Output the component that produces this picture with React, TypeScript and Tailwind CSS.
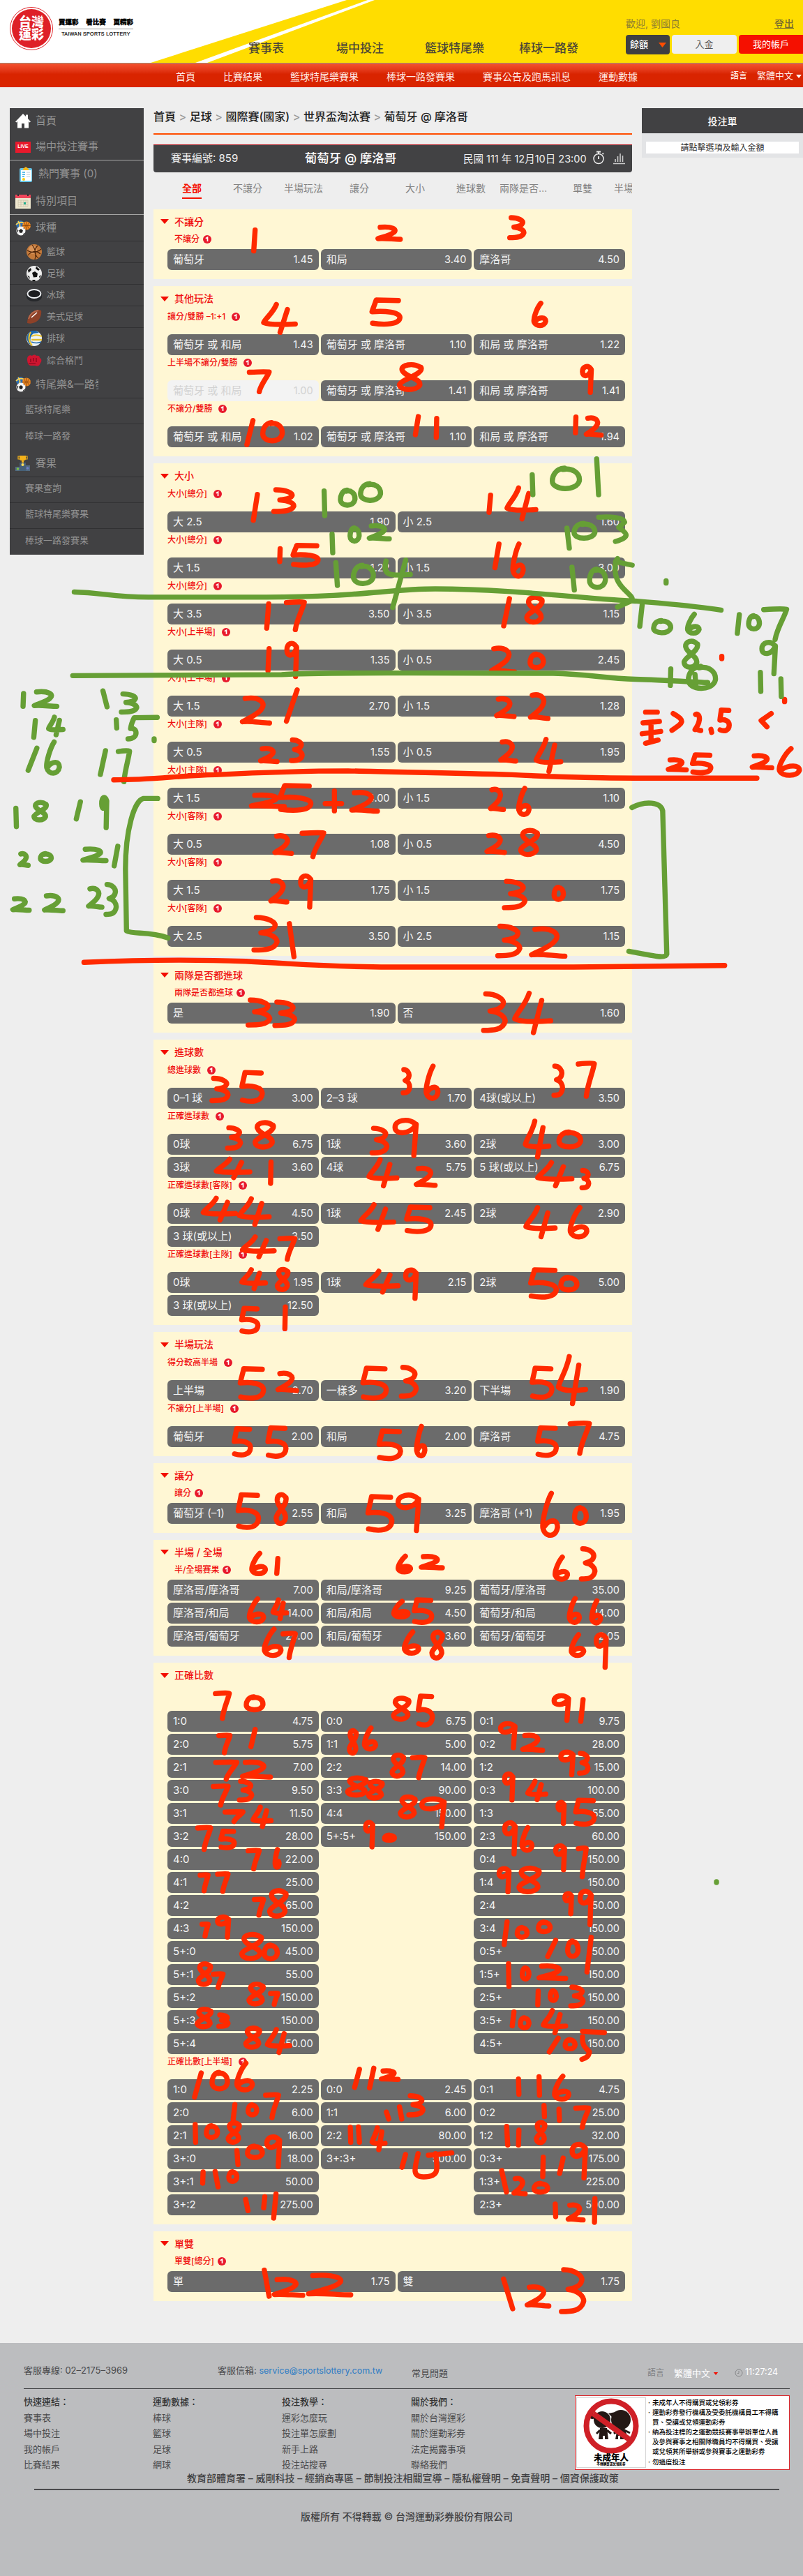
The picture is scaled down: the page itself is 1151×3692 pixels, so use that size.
import React from 'react';

type Odd = [string, string, boolean?];
type Group = { label?: string; cols: 2 | 3; rows: (Odd | null)[] };
type Panel = { title: string; indent?: boolean; groups: Group[] };

const two = (label: string, line: string, over: string, under: string): Group => ({
  label,
  cols: 2,
  rows: [['大 ' + line, over], ['小 ' + line, under]],
});

const columns = (a: Odd[], b: Odd[], c: Odd[]): (Odd | null)[] => {
  const out: (Odd | null)[] = [];
  for (let i = 0; i < Math.max(a.length, b.length, c.length); i++) out.push(a[i] ?? null, b[i] ?? null, c[i] ?? null);
  return out;
};

const panels: Panel[] = [
  { title: '不讓分', indent: true, groups: [{ label: '不讓分', cols: 3, rows: [['葡萄牙', '1.45'], ['和局', '3.40'], ['摩洛哥', '4.50']] }] },
  {
    title: '其他玩法',
    groups: [
      { label: '讓分/雙勝 –1:+1', cols: 3, rows: [['葡萄牙 或 和局', '1.43'], ['葡萄牙 或 摩洛哥', '1.10'], ['和局 或 摩洛哥', '1.22']] },
      { label: '上半場不讓分/雙勝', cols: 3, rows: [['葡萄牙 或 和局', '1.00', true], ['葡萄牙 或 摩洛哥', '1.41'], ['和局 或 摩洛哥', '1.41']] },
      { label: '不讓分/雙勝', cols: 3, rows: [['葡萄牙 或 和局', '1.02'], ['葡萄牙 或 摩洛哥', '1.10'], ['和局 或 摩洛哥', '1.94']] },
    ],
  },
  {
    title: '大小',
    groups: [
      two('大小[總分]', '2.5', '1.90', '1.60'),
      two('大小[總分]', '1.5', '1.22', '3.00'),
      two('大小[總分]', '3.5', '3.50', '1.15'),
      two('大小[上半場]', '0.5', '1.35', '2.45'),
      two('大小[上半場]', '1.5', '2.70', '1.28'),
      two('大小[主隊]', '0.5', '1.55', '1.95'),
      two('大小[主隊]', '1.5', '4.00', '1.10'),
      two('大小[客隊]', '0.5', '1.08', '4.50'),
      two('大小[客隊]', '1.5', '1.75', '1.75'),
      two('大小[客隊]', '2.5', '3.50', '1.15'),
    ],
  },
  { title: '兩隊是否都進球', indent: true, groups: [{ label: '兩隊是否都進球', cols: 2, rows: [['是', '1.90'], ['否', '1.60']] }] },
  {
    title: '進球數',
    groups: [
      { label: '總進球數', cols: 3, rows: [['0–1 球', '3.00'], ['2–3 球', '1.70'], ['4球(或以上)', '3.50']] },
      { label: '正確進球數', cols: 3, rows: [['0球', '6.75'], ['1球', '3.60'], ['2球', '3.00'], ['3球', '3.60'], ['4球', '5.75'], ['5 球(或以上)', '6.75']] },
      { label: '正確進球數[客隊]', cols: 3, rows: [['0球', '4.50'], ['1球', '2.45'], ['2球', '2.90'], ['3 球(或以上)', '3.50']] },
      { label: '正確進球數[主隊]', cols: 3, rows: [['0球', '1.95'], ['1球', '2.15'], ['2球', '5.00'], ['3 球(或以上)', '12.50']] },
    ],
  },
  {
    title: '半場玩法',
    groups: [
      { label: '得分較高半場', cols: 3, rows: [['上半場', '2.70'], ['一樣多', '3.20'], ['下半場', '1.90']] },
      { label: '不讓分[上半場]', cols: 3, rows: [['葡萄牙', '2.00'], ['和局', '2.00'], ['摩洛哥', '4.75']] },
    ],
  },
  { title: '讓分', indent: true, groups: [{ label: '讓分', cols: 3, rows: [['葡萄牙 (–1)', '2.55'], ['和局', '3.25'], ['摩洛哥 (+1)', '1.95']] }] },
  {
    title: '半場 / 全場',
    indent: true,
    groups: [
      {
        label: '半/全場賽果',
        cols: 3,
        rows: [
          ['摩洛哥/摩洛哥', '7.00'], ['和局/摩洛哥', '9.25'], ['葡萄牙/摩洛哥', '35.00'],
          ['摩洛哥/和局', '14.00'], ['和局/和局', '4.50'], ['葡萄牙/和局', '14.00'],
          ['摩洛哥/葡萄牙', '20.00'], ['和局/葡萄牙', '3.60'], ['葡萄牙/葡萄牙', '2.05'],
        ],
      },
    ],
  },
  {
    title: '正確比數',
    groups: [
      {
        cols: 3,
        rows: columns(
          [['1:0', '4.75'], ['2:0', '5.75'], ['2:1', '7.00'], ['3:0', '9.50'], ['3:1', '11.50'], ['3:2', '28.00'], ['4:0', '22.00'], ['4:1', '25.00'], ['4:2', '65.00'], ['4:3', '150.00'], ['5+:0', '45.00'], ['5+:1', '55.00'], ['5+:2', '150.00'], ['5+:3', '150.00'], ['5+:4', '150.00']],
          [['0:0', '6.75'], ['1:1', '5.00'], ['2:2', '14.00'], ['3:3', '90.00'], ['4:4', '150.00'], ['5+:5+', '150.00']],
          [['0:1', '9.75'], ['0:2', '28.00'], ['1:2', '15.00'], ['0:3', '100.00'], ['1:3', '55.00'], ['2:3', '60.00'], ['0:4', '150.00'], ['1:4', '150.00'], ['2:4', '150.00'], ['3:4', '150.00'], ['0:5+', '150.00'], ['1:5+', '150.00'], ['2:5+', '150.00'], ['3:5+', '150.00'], ['4:5+', '150.00']],
        ),
      },
      {
        label: '正確比數[上半場]',
        cols: 3,
        rows: columns(
          [['1:0', '2.25'], ['2:0', '6.00'], ['2:1', '16.00'], ['3+:0', '18.00'], ['3+:1', '50.00'], ['3+:2', '275.00']],
          [['0:0', '2.45'], ['1:1', '6.00'], ['2:2', '80.00'], ['3+:3+', '500.00']],
          [['0:1', '4.75'], ['0:2', '25.00'], ['1:2', '32.00'], ['0:3+', '175.00'], ['1:3+', '225.00'], ['2:3+', '500.00']],
        ),
      },
    ],
  },
  { title: '單雙', indent: true, groups: [{ label: '單雙[總分]', cols: 2, rows: [['單', '1.75'], ['雙', '1.75']] }] },
];

const Badge = () => (
  <svg viewBox="0 0 12 12" className="h-3 w-3 shrink-0">
    <circle cx="6" cy="6" r="6" fill="#e8192c" />
    <path d="M3.8 4.800 6.500 3.200V9" fill="none" stroke="#fff" strokeWidth="1.7" />
  </svg>
);

const OddButton = ({ odd }: { odd: Odd | null }) =>
  odd ? (
    <div className={`flex h-[30px] items-center justify-between rounded-[6px] px-2 text-[15px] ${odd[2] ? 'bg-[#f3f3f3] text-[#d2d2d2]' : 'bg-[#6b6b6b] text-[#f4f4f4]'}`}>
      <span className="whitespace-nowrap">{odd[0]}</span>
      <span className="text-[14.500px]">{odd[1]}</span>
    </div>
  ) : (
    <div className="h-[30px]" />
  );

const PanelView = ({ panel }: { panel: Panel }) => (
  <section className="bg-[#fff7d4] pb-[13px]">
    <div className={`flex items-center pt-[3px] text-[14px] font-medium leading-none text-[#f01010] ${panel.indent ? 'h-[32px]' : 'h-[33px]'}`}>
      <svg viewBox="0 0 12 7" className="ml-[10px] mr-2 h-[7px] w-3"><path d="M0 0h12L6 7z" fill="#f20d00" /></svg>
      {panel.title}
    </div>
    {panel.groups.map((g, i) => (
      <div key={i} className="px-5 pr-[10px]">
        <div className={`flex text-[12px] font-medium leading-none text-[#f01010] ${panel.indent ? 'h-[25px] items-center gap-[5px] pb-[3px] pl-[10px]' : 'h-[36px] items-start gap-[9px] pt-[5px]'}`}>
          {g.label && (<><span>{g.label}</span><Badge /></>)}
        </div>
        <div className={`grid gap-[3px] ${g.cols === 2 ? 'grid-cols-2' : 'grid-cols-3'}`}>
          {g.rows.map((o, j) => <OddButton key={j} odd={o} />)}
        </div>
      </div>
    ))}
  </section>
);

/* ---------- sidebar icons ---------- */
const Home = () => <svg viewBox="0 0 22 21" className="h-[21px] w-[22px]"><path d="M11 0 15 4V1.5h3V7l4 4.5-1.5 1L19 11v9.500h-6V14H9v6.500H3V11l-1.500 1.500L0 11.500z" fill="#fff" /></svg>;
const Live = () => <div className="flex h-4 w-[22px] items-center justify-center bg-[#e8192c] font-['Liberation_Sans'] text-[7px] font-bold text-white">LIVE</div>;
const Clip = () => (
  <svg viewBox="0 0 18 22" className="ml-[6px] h-[22px] w-[18px]">
    <rect y="2" width="18" height="20" rx="2" fill="#67c6ea" /><rect x="2" y="5" width="15" height="15" fill="#fff" />
    <path d="M9 0l4 3v2H5V3z" fill="#f7b717" /><path d="M4 8h4M4 11h4M4 14h3" stroke="#2ea9df" strokeWidth="1.400" /><path d="M10 8h5M10 11h5M10 14h5" stroke="#b9c8d4" /><circle cx="6" cy="18" r="2" fill="#f7d217" />
  </svg>
);
const Cal = () => (
  <svg viewBox="0 0 22 21" className="h-[21px] w-[22px]">
    <rect y="2" width="22" height="19" fill="#efe7cf" /><rect y="1" width="22" height="5" fill="#f0465a" />
    <path d="M4 0v3M18 0v3" stroke="#333" strokeWidth="2" /><path d="M4 9h14v9H4zM4 12h14M4 15h14M8 9v9M12 9v9M15 9v9" fill="none" stroke="#c9c2a8" strokeWidth=".8" /><rect x="12" y="12" width="3" height="3" fill="#1fae8d" />
  </svg>
);
const Balls = () => (
  <svg viewBox="0 0 22 22" className="h-[22px] w-[22px]">
    <circle cx="7" cy="6" r="6" fill="#2f6fb3" /><path d="M1 6c4-4 8-4 12-2M4 1c3 3 3 7 1 10" stroke="#ffd34d" strokeWidth="1.700" fill="none" />
    <circle cx="16" cy="7.500" r="6" fill="#f08a24" /><path d="M10 7.500h12M16 1.500v12M12 3c3 3 3 6 0 9M20 3c-3 3-3 6 0 9" stroke="#7a3d0a" strokeWidth=".8" fill="none" />
    <circle cx="8" cy="15" r="6.500" fill="#f4f4f4" /><path d="M8 12.500l2.500 1.800-1 3H6.500l-1-3zM2.500 13l1.500 1-1 3M13 12l-1.500-1M11 20l2-2" fill="#222" stroke="#222" strokeWidth=".8" />
  </svg>
);
const Basket = () => <svg viewBox="0 0 22 22" className="h-[22px] w-[22px]"><circle cx="11" cy="11" r="11" fill="#c47a3b" /><circle cx="9" cy="8" r="6" fill="#d9955a" /><path d="M1 9c7 4 14 3 20-2M8 1c5 6 6 13 4 21M2 16c5-6 11-8 18-2M16 2c-5 5-6 12 1 18" stroke="#4a2208" strokeWidth="1.100" fill="none" /></svg>;
const Soccer = () => <svg viewBox="0 0 22 22" className="h-[22px] w-[22px]"><circle cx="11" cy="11" r="11" fill="#ededed" /><path d="M8 10l4-2 4 3-1 5-5 .5zM2 6l4-3 1 3-4 4zM14 1l5 4-2 2-4-3zM1 14l3 1 1 4zM18 15l3-2-2 5zM8 20l5 0-1 2H9z" fill="#111" /></svg>;
const Puck = () => <svg viewBox="0 0 22 18" className="h-[18px] w-[22px]"><path d="M0 8v4c2 8 20 8 22 0V8z" fill="#26282b" /><ellipse cx="11" cy="7" rx="9.500" ry="6" fill="#1c1d20" stroke="#f3f5f8" strokeWidth="1.800" /></svg>;
const Football = () => <svg viewBox="0 0 22 22" className="h-[22px] w-[22px]"><path d="M21 2C12-1 1 7 1 20c9 3 22-4 20-18z" fill="#8d4128" /><path d="M3 14C5 7 10 3 17 2" stroke="#b6674a" strokeWidth="2" fill="none" /><path d="M7 12l8-7" stroke="#fff" strokeWidth="1.500" /></svg>;
const Volley = () => <svg viewBox="0 0 22 22" className="h-[22px] w-[22px]"><circle cx="11" cy="11" r="11" fill="#eef3f6" /><path d="M8 0C0 3-2 12 4 19l4 2C4 14 5 8 10 4l8-1C15 0 11-1 8 0z" fill="#1d67ad" /><path d="M6 2C2 8 3 16 8 21M7 8c4-2 10-2 15 0" stroke="#f1c62b" strokeWidth="2" fill="none" /><path d="M7 13h15" stroke="#e5bd2f" strokeWidth="2.500" /><path d="M7 16c5 2 10 2 14 0" stroke="#1d67ad" strokeWidth="1.500" fill="none" /></svg>;
const Fist = () => <svg viewBox="0 0 22 18" className="h-[18px] w-[22px]"><path d="M1 7C1 2 5 0 8 2c2-2 5-2 6 0 3-1 5 0 5 3 3 1 3 5 1 7-1 4-4 6-8 4H6C3 16 1 12 1 7z" fill="#cf1530" /><path d="M6 6v5M10 5v5M14 5v6M3 13h10" stroke="#7d0719" strokeWidth="1.100" fill="none" /></svg>;
const Trophy = () => <svg viewBox="0 0 22 22" className="h-[22px] w-[22px]"><path d="M6 0h9v5c0 3-9 3-9 0zM9 7h3v4H9z" fill="#f4b21b" /><path d="M4 1h13v4H4z" fill="none" stroke="#f4b21b" strokeWidth="1.200" /><path d="M6 10h9v12H6z" fill="#466078" /><path d="M0 16h6v6H0zM15 14h6v8h-6z" fill="#526b82" /><circle cx="10.500" cy="13" r="2" fill="#ffe05a" /><circle cx="3.500" cy="19" r="1.800" fill="#7fc247" /><circle cx="17.500" cy="18" r="1.800" fill="#6f7fc7" /></svg>;

const Main = ({ icon, label, h, line }: { icon: React.ReactNode; label: string; h: string; line: string }) => (
  <div className={`flex items-center pl-2 ${h} ${line}`}>
    <div className="w-7 shrink-0">{icon}</div>
    <span className="ml-px w-[90px] overflow-hidden whitespace-nowrap text-[15px]">{label}</span>
  </div>
);
const Sport = ({ icon, label, line }: { icon: React.ReactNode; label: string; line: string }) => (
  <div className={`flex h-[31px] items-center pl-6 text-[13px] ${line}`}><div className="w-[29px]">{icon}</div>{label}</div>
);
const Sub = ({ label, line }: { label: string; line: string }) => (
  <div className={`flex h-[37.300px] items-center pb-1 pl-[22px] text-[13px] ${line}`}>{label}</div>
);
const dark = 'border-b border-[#313133]';

const Sidebar = () => (
  <aside className="ml-[14px] h-[640px] w-48 bg-[#414143] text-[#929292]">
    <Main icon={<Home />} label="首頁" h="h-[37px]" line="" />
    <Main icon={<Live />} label="場中投注賽事" h="h-[38px]" line="border-b border-[#a5a5a5]" />
    <div className="[&_span]:ml-[5px]"><Main icon={<Clip />} label="熱門賽事 (0)" h="h-[39px]" line="" /></div>
    <Main icon={<Cal />} label="特別項目" h="h-[39px]" line="border-b border-[#a5a5a5]" />
    <Main icon={<Balls />} label="球種" h="h-[38px]" line={dark} />
    <Sport icon={<Basket />} label="籃球" line={dark} />
    <Sport icon={<Soccer />} label="足球" line={dark} />
    <Sport icon={<Puck />} label="冰球" line={dark} />
    <Sport icon={<Football />} label="美式足球" line={dark} />
    <Sport icon={<Volley />} label="排球" line={dark} />
    <Sport icon={<Fist />} label="綜合格鬥" line="" />
    <Main icon={<Balls />} label="特尾樂&一路發" h="h-[39px]" line={dark} />
    <Sub label="籃球特尾樂" line={dark} />
    <Sub label="棒球一路發" line="" />
    <Main icon={<Trophy />} label="賽果" h="h-[38px]" line={dark} />
    <Sub label="賽果查詢" line={dark} />
    <Sub label="籃球特尾樂賽果" line={dark} />
    <Sub label="棒球一路發賽果" line="" />
  </aside>
);

const Header = () => (
  <header className="relative h-[91px] overflow-hidden border-b border-[#9d8f7a] bg-white">
    <svg viewBox="0 0 1151 90" className="absolute inset-0 h-[90px] w-[1151px]">
      <path d="M497 0H527L280 90H216zM537 0H1151V90H297z" fill="#ffdd00" />
    </svg>
    <div className="relative flex h-[90px]">
      <div className="ml-[14px] mt-[10px] flex h-[62px] w-[62px] items-center justify-center rounded-full border border-[#e0262b] p-[2px]">
        <div className="flex h-full w-full flex-col items-center justify-center rounded-full bg-[#de2027] text-[18px] font-black leading-[18px] text-white"><span>台灣</span><span>運彩</span></div>
      </div>
      <div className="ml-2 mt-[25px] w-[107px] text-center text-black">
        <div className="flex justify-between border-b border-[#999] pb-[3px] text-[9.500px] font-black leading-[13px] [-webkit-text-stroke:0.4px_black]"><span>買運彩</span><span>看比賽</span><span>更精彩</span></div>
        <div className="mt-[3px] whitespace-nowrap font-['Liberation_Sans'] text-[7px] font-medium leading-[8px] tracking-[0.350px] [-webkit-text-stroke:0.2px_black]">TAIWAN SPORTS LOTTERY</div>
      </div>
      <nav className="ml-[165px] mt-[58px] flex h-6 items-center whitespace-nowrap text-[17px] font-medium text-[#4b4636]">
        <span className="w-[126px]">賽事表</span><span className="w-[127px]">場中投注</span><span className="w-[135px]">籃球特尾樂</span><span className="w-[153px]">棒球一路發</span>
      </nav>
      <div className="w-[254px] shrink-0 pt-[23px]">
        <div className="flex h-5 items-center justify-between pr-[13px] text-[14px] text-[#8f8030]"><span>歡迎, 劉國良</span><span className="font-medium text-[#776a30] underline">登出</span></div>
        <div className="mt-[7px] flex gap-[3px] text-[13px]">
          <div className="flex h-7 w-[63px] items-center justify-between rounded bg-[#3f3f41] pl-[6px] pr-[5px] font-medium text-white">餘額<svg viewBox="0 0 11 7" className="h-[7px] w-[11px]"><path d="M0 0h11L5.500 7z" fill="#ff4d00" /></svg></div>
          <div className="flex h-[27px] w-[93px] items-center justify-center rounded bg-[#efefef] text-[#555]">入金</div>
          <div className="flex h-[27px] w-[92px] items-center justify-center rounded-l bg-[#f51000] text-white">我的帳戶</div>
        </div>
      </div>
    </div>
  </header>
);

const TopNav = () => (
  <div className="flex h-[34px] items-center gap-10 whitespace-nowrap bg-linear-to-b from-[#f4512f] to-[#d92400] to-45% pl-[252px] pt-[2px] text-[14px] text-[#ffeae4]">
    <span>首頁</span><span>比賽結果</span><span>籃球特尾樂賽果</span><span>棒球一路發賽果</span><span>賽事公告及跑馬訊息</span><span>運動數據</span>
    <span className="ml-auto flex items-center text-[12px] font-medium">語言<span className="ml-[14px] mr-1 text-[13px] font-normal">繁體中文</span><svg viewBox="0 0 8 5" className="mr-[2px] h-[5px] w-2"><path d="M0 0h8L4 5z" fill="#fff" /></svg></span>
  </div>
);

const Sep = () => <span className="mx-[4.500px] text-[#999]">&gt;</span>;

const Center = () => (
  <main className="ml-[14px] w-[686px]">
    <div className="flex h-[38px] items-start whitespace-nowrap border-b-2 border-[#ff4d00] text-[16px] font-medium leading-6 text-[#222]">
      首頁<Sep />足球<Sep />國際賽(國家)<Sep />世界盃淘汰賽<Sep />葡萄牙 @ 摩洛哥
    </div>
    <div className="mt-[14px] flex h-10 items-center whitespace-nowrap rounded-b-sm border-t border-[#b3121b] bg-[#424244] text-[15px] text-[#f0f0f0]">
      <span className="ml-[25px] w-[190px]">賽事編號: 859</span>
      <span className="w-[135px] text-center text-[17.500px] font-medium text-white">葡萄牙 @ 摩洛哥</span>
      <span className="ml-[94px] w-[183px] text-[14.500px]">民國 111 年 12月10日 23:00</span>
      <svg viewBox="0 0 18 20" className="mb-1 ml-[2px] h-5 w-[18px]"><circle cx="9" cy="11.500" r="7" fill="none" stroke="#eee" strokeWidth="1.500" /><path d="M6 1.500h6M9 2v3M9 8v4M14.500 5l1.500-1.500" stroke="#eee" strokeWidth="1.800" /></svg>
      <svg viewBox="0 0 17 17" className="ml-[12px] h-[17px] w-[17px]"><path d="M0 15.500h17M3 9v4M6.500 5v8M10 1v12M13.500 4v9" stroke="#ccc" strokeWidth="1.600" /></svg>
    </div>
    <div className="flex h-[53px] overflow-hidden whitespace-nowrap pl-[15px] text-[14px] text-[#828282]">
      {['全部', '不讓分', '半場玩法', '讓分', '大小', '進球數', '兩隊是否…', '單雙', '半場 / 全場'].map((t, i) => (
        <div key={t} className={`w-20 shrink-0 pt-3 ${i === 8 ? 'pl-[5px]' : i === 6 ? 'pl-[1px]' : 'text-center'}`}>
          <span className={`inline-block h-[25px] leading-5 ${i === 0 ? 'border-b-2 border-[#f51000] font-bold text-[#f51000]' : ''}`}>{t}</span>
        </div>
      ))}
    </div>
    <div className="flex flex-col gap-[10px]">{panels.map((p) => <PanelView key={p.title} panel={p} />)}</div>
  </main>
);

const Slip = () => (
  <aside className="ml-[14px] flex-1">
    <div className="flex h-9 items-center justify-center bg-[#414143] text-[14px] font-medium text-white">投注單</div>
    <div className="h-[35px] bg-[#e3e4e6] px-[6px] pt-3"><div className="h-[17px] bg-white text-center text-[12px] leading-[17px] text-[#333]">請點擊選項及輸入金額</div></div>
  </aside>
);

const footCols: [string, string[]][] = [
  ['快速連結：', ['賽事表', '場中投注', '我的帳戶', '比賽結果']],
  ['運動數據：', ['棒球', '籃球', '足球', '網球']],
  ['投注教學：', ['運彩怎麼玩', '投注單怎麼劃', '新手上路', '投注站搜尋']],
  ['關於我們：', ['關於台灣運彩', '關於運動彩券', '法定揭露事項', '聯絡我們']],
];
const notice = ['·未成年人不得購買或兌領彩券', '·運動彩券發行機構及受委託機構員工不得購', ' 買、受讓或兌領運動彩券', '·納為投注標的之運動競技賽事舉辦單位人員', ' 及參與賽事之相關隊職員均不得購買、受讓', ' 或兌領其所舉辦或參與賽事之運動彩券', '·勿過度投注'];

const Footer = () => (
  <footer className="h-[334px] bg-[#bcbdbf] px-[34px] pr-[19px] text-[13px] text-[#4a4a4c]">
    <div className="flex h-[66px] items-start whitespace-nowrap border-b border-[#3e3e40] pt-[29px] leading-5">
      <span className="w-[278px]">客服專線: 02–2175–3969</span>
      <span className="w-[278px]">客服信箱: <span className="text-[12.500px] text-[#2f7cc4]">service@sportslottery.com.tw</span></span>
      <span className="mt-1 w-[338px]">常見問題</span>
      <span className="mt-1 text-[12px] text-[#7e7f82]">語言</span>
      <span className="ml-[14px] mt-1 text-white">繁體中文</span>
      <svg viewBox="0 0 8 5" className="ml-1 mt-[13px] h-1 w-2"><path d="M0 0h8L4 5z" fill="#f20d00" /></svg>
      <svg viewBox="0 0 12 12" className="ml-[23px] mt-2 h-3 w-3"><circle cx="6" cy="6" r="5" fill="none" stroke="#858688" /><path d="M6 3v3.500H4" fill="none" stroke="#858688" /></svg>
      <span className="ml-[3px] mt-[3px] text-[12.500px] text-white">11:27:24</span>
    </div>
    <div className="flex h-[118px] whitespace-nowrap">
      {footCols.map(([h, items]) => (
        <div key={h} className="w-[185px] pt-[7px]">
          <div className="h-[24px] font-medium leading-[22px] text-[#333]">{h}</div>
          {items.map((t) => <div key={t} className="h-[22.400px] leading-[20px]">{t}</div>)}
        </div>
      ))}
      <div className="ml-[50px] mt-[9px] flex h-[107px] w-[308px] shrink-0 border border-[#d9262b] bg-white text-black">
        <div className="ml-px mt-[2px] h-[101px] w-[100px] border border-[#d5d5d5] text-center">
          <svg viewBox="0 0 80 80" className="mx-auto h-[80px] w-[80px]">
            <g fill="#231815"><circle cx="27" cy="31" r="12" /><circle cx="54" cy="31" r="14" /><circle cx="13" cy="26" r="4" /><path d="M36 22l10-2-2 10zM24 43h10l2 16h-5v-5h-3v5h-6zM49 43h10l3 8-4 8h-5v-5h-3v5h-4z" /><path d="M24 46l-5 5M34 46l6 5M50 46l-6 5M59 46l8 4" stroke="#231815" strokeWidth="3" /></g>
            <circle cx="40" cy="40" r="35.500" fill="none" stroke="#cf2027" strokeWidth="8" /><path d="M14 22 67 60" stroke="#cf2027" strokeWidth="8" />
          </svg>
          <div className="text-[12.500px] font-black leading-[11px]">未成年人</div>
          <div className="text-[4.600px] font-black leading-[7px]">不得購買或兌領彩券</div>
        </div>
        <div className="ml-[3px] pt-[3px] text-[9.500px] font-medium leading-[14.100px]">
          {notice.map((t) => <div key={t} className="flex"><span className="w-[6px]">{t[0] === '·' ? '·' : ''}</span><span>{t.slice(1)}</span></div>)}
        </div>
      </div>
    </div>
    <div className="ml-[15px] mr-[15px] flex h-[27px] items-start whitespace-nowrap border-b-2 border-[#4a4a4c] pl-[219px] text-[14px] font-medium leading-5 text-[#404042]">教育部體育署 – 威剛科技 – 經銷商專區 – 節制投注相關宣導 – 隱私權聲明 – 免責聲明 – 個資保護政策</div>
    <div className="mt-[28px] text-center text-[14px] font-medium leading-5 text-[#404042]">版權所有 不得轉載 © 台灣運動彩券股份有限公司</div>
  </footer>
);

/* ---------- marker annotations ---------- */
// Pen strokes per digit in a unit box: "l" is a one leaning the other way.
const pen: Record<string, string> = {
  '0': 'M.45 .02C.1 .05 0 .4 0 .6C0 1.05 .9 1.1 1 .6C1.03 .2 .7 0 .4 .08',
  '1': 'M1 0L0 1',
  l: 'M0 0L1 1',
  '2': 'M.1 .04C.6 -.05 .9 .2 .7 .45C.6 .65 .15 .85 0 .95C.3 .9 .7 1 1 1',
  '3': 'M.1 0C.6 0 1 .15 .9 .28C.85 .4 .5 .45 .3 .47C.8 .5 1 .65 1 .75C.9 1 .4 1 0 1',
  '4': 'M.4 0C.3 .3 .05 .5 0 .65C.2 .75 .7 .72 1 .7M.75 .18L.52 1',
  '5': 'M.95 .02L.2 0C.15 .2 .1 .3 .06 .48C.5 .43 1 .5 1 .72C.98 1 .5 1.03 .08 .95',
  '6': 'M.6 0C.3 .2 -.02 .65 .05 .82C.2 1.05 .9 1.05 1 .8C1 .6 .5 .6 .15 .78',
  '7': 'M0 .04C.4 .02 .8 0 1 .03C.9 .3 .6 .6 .5 1',
  '8': 'M.85 .1C.6 -.06 .1 0 .15 .22C.25 .5 .9 .55 .85 .82C.7 1.07 .05 1.05 .05 .8C.1 .6 1 .4 .9 .12',
  '9': 'M.9 .1C.6 -.06 .02 0 .05 .22C.05 .42 .7 .42 .95 .12L.85 1',
};

type Note = { x: number; y: number; kx: number; ky: number; color: string; marks: string; extra?: string };
const RED = '#ff2a00';
const GREEN = '#669f35';

// Each mark is "digit left top right bottom" in the note's own units.
const notes: Note[] = [
  { x: 210, y: 290, kx: 2.24, ky: 3, color: RED, marks: '1 336 108 357 220,2 735 94 823 170,3 1158 55 1220 163,4 368 428 486 570,5 710 409 822 536,6 1234 423 1290 542,7 322 716 402 825,8 800 686 898 816,9 1390 694 1438 828,1 314 927 350 1053,0 365 934 444 1040,1 855 910 881 1010,1 922 918 940 1022,1 1369 912 1387 1002,2 1404 914 1468 1012' },
  { x: 210, y: 650, kx: 1.6663, ky: 3, color: RED, marks: '1 249 165 271 298,3 298 145 358 260,1 812 168 828 264,4 855 137 936 292,1 312 398 325 476,5 340 384 416 492,1 826 378 848 502,6 868 378 906 540,1 281 635 298 762,7 328 625 383 768,1 847 613 873 752,8 900 606 955 736,1 284 828 299 945,9 328 804 366 970,2 818 824 885 950,0 910 850 954 934,2 223 1038 300 1170,1 328 1005 366 1162,2 830 1042 884 1142,2 911 1024 965 1150,2 1304 1108 1330 1202,l 1342 1175 1356 1210,5 1362 1092 1398 1204', extra: 'M1192 1112H1220M1186 1158L1225 1152M1205 1158V1235M1184 1205L1228 1195M1192 1246L1222 1232M1258 1118C1290 1150 1280 1160 1255 1190M1492 1118L1468 1148L1482 1175M1374 872V882M1524 1057V1067' },
  { x: 210, y: 650, kx: 1.6663, ky: 3, color: GREEN, marks: 'l 418 150 432 278,0 457 145 504 236,0 505 117 565 216,l 915 80 929 188,0 963 50 1040 166,l 1069 12 1086 188,l 437 335 451 438,0 480 308 514 390,2 526 298 586 378,l 998 310 1016 418,0 1015 288 1077 378,l 446 458 462 578,0 488 468 548 574,l 1010 478 1028 598,0 1052 484 1102 590,1 1172 640 1190 754,0 1205 706 1258 784,6 1285 680 1326 784,1 1405 682 1422 784,0 1432 685 1470 768,7 1468 655 1535 810,8 1276 795 1326 930,9 1462 800 1510 958,1 1245 915 1256 1008,0 1288 902 1365 1025,l 1460 930 1472 1034,l 1509 958 1520 1056', extra: 'M1080 274C1110 270 1140 275 1142 295L1128 318C1150 345 1155 360 1120 378M572 462C565 520 575 528 630 520M619 458L588 662M1160 480L1120 465L1125 452M1120 475C1112 580 1165 600 1160 632L1125 660M1310 950L1312 990M1241 547V557' },
  { x: 0, y: 820, kx: 1.3623, ky: 2.7034, color: GREEN, marks: '1 40 460 50 530,2 62 452 116 530,l 196 450 214 532,3 232 462 272 552,1 61 565 74 650,4 90 552 128 640,l 222 562 232 614,1 50 672 77 778,6 85 648 121 790,1 191 682 211 794,7 226 680 258 822,l 26 905 36 996,8 60 882 98 970,1 144 880 162 966,9 193 862 214 1000,2 34 1080 60 1146,0 74 1080 105 1132,2 157 1062 212 1128,1 218 1052 235 1148,2 20 1254 62 1320,2 82 1242 128 1322,2 168 1214 204 1308,3 202 1200 232 1336', extra: 'M307 563L262 564C258 580 256 592 255 606C268 600 272 645 250 646M301 646V653M145 77C200 80 220 97 290 97L520 97C700 97 760 65 850 65C1000 65 1150 105 1240 112C1320 125 1370 135 1408 147M142 401C300 401 450 400 550 397C600 390 700 391 800 391L1080 392C1150 395 1180 412 1240 415C1290 418 1340 424 1382 428M308 877H280C262 885 245 1000 245 1150L247 1390C260 1405 290 1390 328 1417M1234 912C1260 885 1290 890 1294 925L1302 1480C1300 1500 1270 1485 1228 1469' },
  { x: 0, y: 820, kx: 1.3623, ky: 2.7034, color: RED, marks: '2 504 672 546 744,3 564 640 595 740,2 973 645 1012 742,4 1042 638 1100 782,2 1300 716 1345 776,5 1345 698 1393 788,2 1464 700 1512 768,6 1515 674 1566 798,2 486 853 560 918,5 538 817 612 934,2 682 842 742 936,2 953 830 988 930,6 1007 828 1038 950,2 532 1010 574 1100,7 585 998 637 1112,2 946 1008 990 1096,8 1010 990 1058 1104,2 524 1184 565 1288,9 581 1166 613 1308,3 980 1188 1030 1310,0 1077 1210 1105 1280,3 491 1328 546 1474,l 560 1352 579 1500,3 967 1362 1020 1496,2 1033 1370 1108 1498', extra: 'M635 897H667M653 848V925M222 805C300 805 350 788 420 785C520 775 600 770 680 770C780 775 900 778 1000 785C1100 795 1200 798 1240 798L1478 798M164 1512C300 1500 400 1502 480 1508C600 1520 650 1530 760 1530L1120 1530C1250 1526 1350 1524 1415 1524' },
  { x: 210, y: 1370, kx: 2.24, ky: 2.851, color: RED, marks: '3 318 170 404 293,3 404 178 484 295,3 1074 145 1160 315,4 1174 142 1306 324,3 202 490 270 602,5 294 466 380 606,3 816 454 853 570,6 888 440 944 594,3 1300 440 1344 580,7 1378 426 1446 584,3 252 692 310 796,8 337 670 422 792,3 716 694 780 815,9 786 660 878 826,4 1208 665 1300 832,0 1316 708 1402 794,4 216 820 340 916,1 390 832 408 940,4 706 822 812 950,2 858 856 935 948,4 1248 834 1374 950,3 1390 866 1428 958,4 174 980 294 1090,4 290 982 402 1108,4 680 1006 802 1128,5 822 1016 922 1138,4 1210 1018 1320 1158,6 1350 1018 1422 1160,4 300 1138 418 1240,7 420 1142 484 1250,4 298 1272 390 1370,8 410 1270 466 1374,4 696 1278 816 1384,9 822 1272 876 1410,5 1220 1272 1324 1406,0 1322 1302 1390 1378,5 294 1430 366 1548,1 436 1424 454 1534' },
  { x: 210, y: 1900, kx: 2.24, ky: 3, color: RED, marks: '5 288 174 384 324,2 414 192 490 290,5 682 172 778 324,3 810 168 874 314,5 1226 172 1310 320,4 1314 122 1418 346,5 270 432 342 568,5 378 428 456 574,5 734 442 824 584,6 858 422 902 572,5 1244 428 1324 570,7 1352 406 1430 560,5 282 716 368 880,8 406 714 460 862,5 698 724 796 892,9 796 716 886 892,6 1262 710 1328 914,0 1366 770 1420 864,6 328 968 390 1078,1 410 990 430 1076,6 798 980 856 1070,2 874 980 958 1052,6 1302 984 1360 1102,3 1388 948 1448 1100,6 320 1164 384 1286,4 398 1168 458 1270,6 784 1174 848 1264,5 848 1168 924 1288,6 1348 1162 1398 1288,6 1420 1172 1466 1290,6 368 1294 440 1430,7 430 1310 486 1438,6 818 1306 882 1420,8 906 1306 962 1440,6 1354 1318 1412 1430,9 1434 1316 1486 1480' },
  { x: 210, y: 2380, kx: 2.24, ky: 2.8, color: RED, marks: '7 213 118 274 242,0 312 134 382 210,8 782 140 856 246,5 862 132 926 270,9 1298 130 1366 250,1 1386 146 1410 254,7 224 288 276 380,1 327 266 357 356,8 642 270 684 382,6 690 260 744 366,9 1126 242 1194 360,2 1200 288 1280 370,7 214 396 298 486,2 300 396 406 478,8 778 368 838 474,7 846 376 902 480,9 1320 356 1380 468,3 1382 362 1426 462,7 206 492 270 590,3 290 474 346 570,8 634 460 720 550,8 702 474 770 562,9 1140 444 1186 570,4 1216 474 1290 568,7 244 596 318 656,4 334 578 408 676,8 804 536 876 638,9 872 544 968 678,9 1312 558 1350 664,5 1366 550 1446 668,7 156 658 214 768,5 228 674 290 762,9 694 638 736 758,0 756 690 804 732,9 1140 640 1194 786,6 1196 660 1246 772,7 318 750 370 846,6 404 748 434 840,9 1304 732 1352 850,7 1378 740 1420 878,7 164 848 206 934,7 220 844 270 936,9 1122 824 1174 938,8 1184 822 1276 938,7 338 946 384 1032,8 384 912 462 1036,9 1334 924 1374 1026,9 1382 914 1438 1070,7 170 1046 206 1116,9 218 1018 274 1120,1 1140 1038 1166 1150,0 1182 1060 1230 1122,0 1250 1038 1304 1100,8 294 1088 384 1206,0 370 1130 428 1210,1 1280 1112 1322 1198,0 1344 1114 1394 1200,1 1406 1100 1436 1260,8 156 1206 218 1310,7 206 1246 254 1322,l 1154 1206 1172 1318,0 1198 1222 1236 1290,2 1252 1214 1354 1286,8 318 1288 388 1388,7 390 1324 430 1390,1 1248 1316 1266 1392,0 1288 1314 1324 1376,3 1354 1300 1410 1396,8 152 1388 220 1480,3 224 1412 270 1478,1 1166 1400 1188 1476,0 1192 1422 1236 1486,4 1266 1394 1354 1504,8 308 1464 376 1562,4 380 1470 468 1583,1 1285 1505 1330 1581,0 1336 1510 1384 1570', extra: 'M1470 1493L1400 1488M1400 1510C1398 1540 1405 1550 1422 1570C1420 1590 1410 1595 1398 1600' },
  { x: 210, y: 2920, kx: 2.24, ky: 3, color: RED, marks: '1 146 142 184 268,0 202 138 268 236,6 280 100 348 238,1 660 126 692 226,1 708 122 738 228,2 746 132 816 192,l 1186 168 1204 256,l 1252 158 1270 260,6 1300 156 1364 278,1 270 278 292 364,0 318 278 362 346,7 374 234 432 356,l 762 310 786 362,l 804 288 828 362,3 834 240 896 344,l 1268 282 1286 352,l 1316 298 1334 368,7 1370 290 1428 398,l 148 364 166 462,0 184 368 236 444,8 252 356 310 462,l 646 376 664 462,l 672 374 692 462,4 716 378 774 494,l 1148 372 1168 474,1 1186 388 1204 474,8 1242 354 1290 464,l 282 476 302 558,0 316 456 380 530,9 376 416 438 566,1 812 492 840 570,1 1264 504 1282 610,1 1318 508 1346 596,9 1356 448 1420 616,1 172 568 190 638,l 212 566 238 654,0 256 566 298 632,l 1132 562 1164 676,2 1172 594 1224 684,0 1236 616 1296 678,l 310 686 334 756,1 368 674 388 744,1 400 662 424 788,l 1304 706 1322 782,2 1346 708 1410 796,1 1430 682 1448 806,l 370 990 402 1124,2 402 1028 510 1120,2 512 1010 664 1118,l 1138 1028 1184 1178,2 1214 1060 1300 1166,3 1324 988 1412 1190', extra: 'M872 500C862 560 850 600 890 600C940 600 935 570 928 500M905 507L980 497' },
];

const stretch = (d: string, x: number, y: number, w: number, h: number) => {
  let i = 0;
  return d.replace(/-?\d*\.?\d+/g, (n) => {
    const v = i++ % 2 === 0 ? x + Number(n) * w : y + Number(n) * h;
    return v.toFixed(1) + ' ';
  });
};

const notePath = (n: Note) =>
  n.marks
    .split(',')
    .map((m) => {
      const [k, ...rest] = m.split(' ');
      const [l, t, r, b] = rest.map(Number);
      const px = 3.7 * n.kx;
      const py = 3.7 * n.ky;
      return stretch(pen[k], l + px, t + py, Math.max(r - l - 2 * px, 1), Math.max(b - t - 2 * py, 1));
    })
    .join('') + (n.extra ?? '');

const Ink = () => (
  <svg viewBox="0 0 1151 3692" className="pointer-events-none absolute inset-0 h-[3692px] w-[1151px]" fill="none" strokeWidth="7.400" strokeLinecap="round" strokeLinejoin="round">
    {notes.map((n, i) => (
      <g key={i} stroke={n.color} transform={`translate(${n.x} ${n.y}) scale(${1 / n.kx} ${1 / n.ky})`}>
        <path d={notePath(n)} vectorEffect="non-scaling-stroke" />
      </g>
    ))}
    <path d="M1027 2697v1" stroke={GREEN} />
  </svg>
);

export default function App() {
  return (
    <div className="relative h-[3692px] w-[1151px] overflow-hidden bg-[#eeeeee] font-['Inter','Noto_Sans_CJK_TC',sans-serif]">
      <Header />
      <TopNav />
      <div className="flex h-[3233px] items-start pt-[30px]">
        <Sidebar />
        <Center />
        <Slip />
      </div>
      <Footer />
      <Ink />
    </div>
  );
}
